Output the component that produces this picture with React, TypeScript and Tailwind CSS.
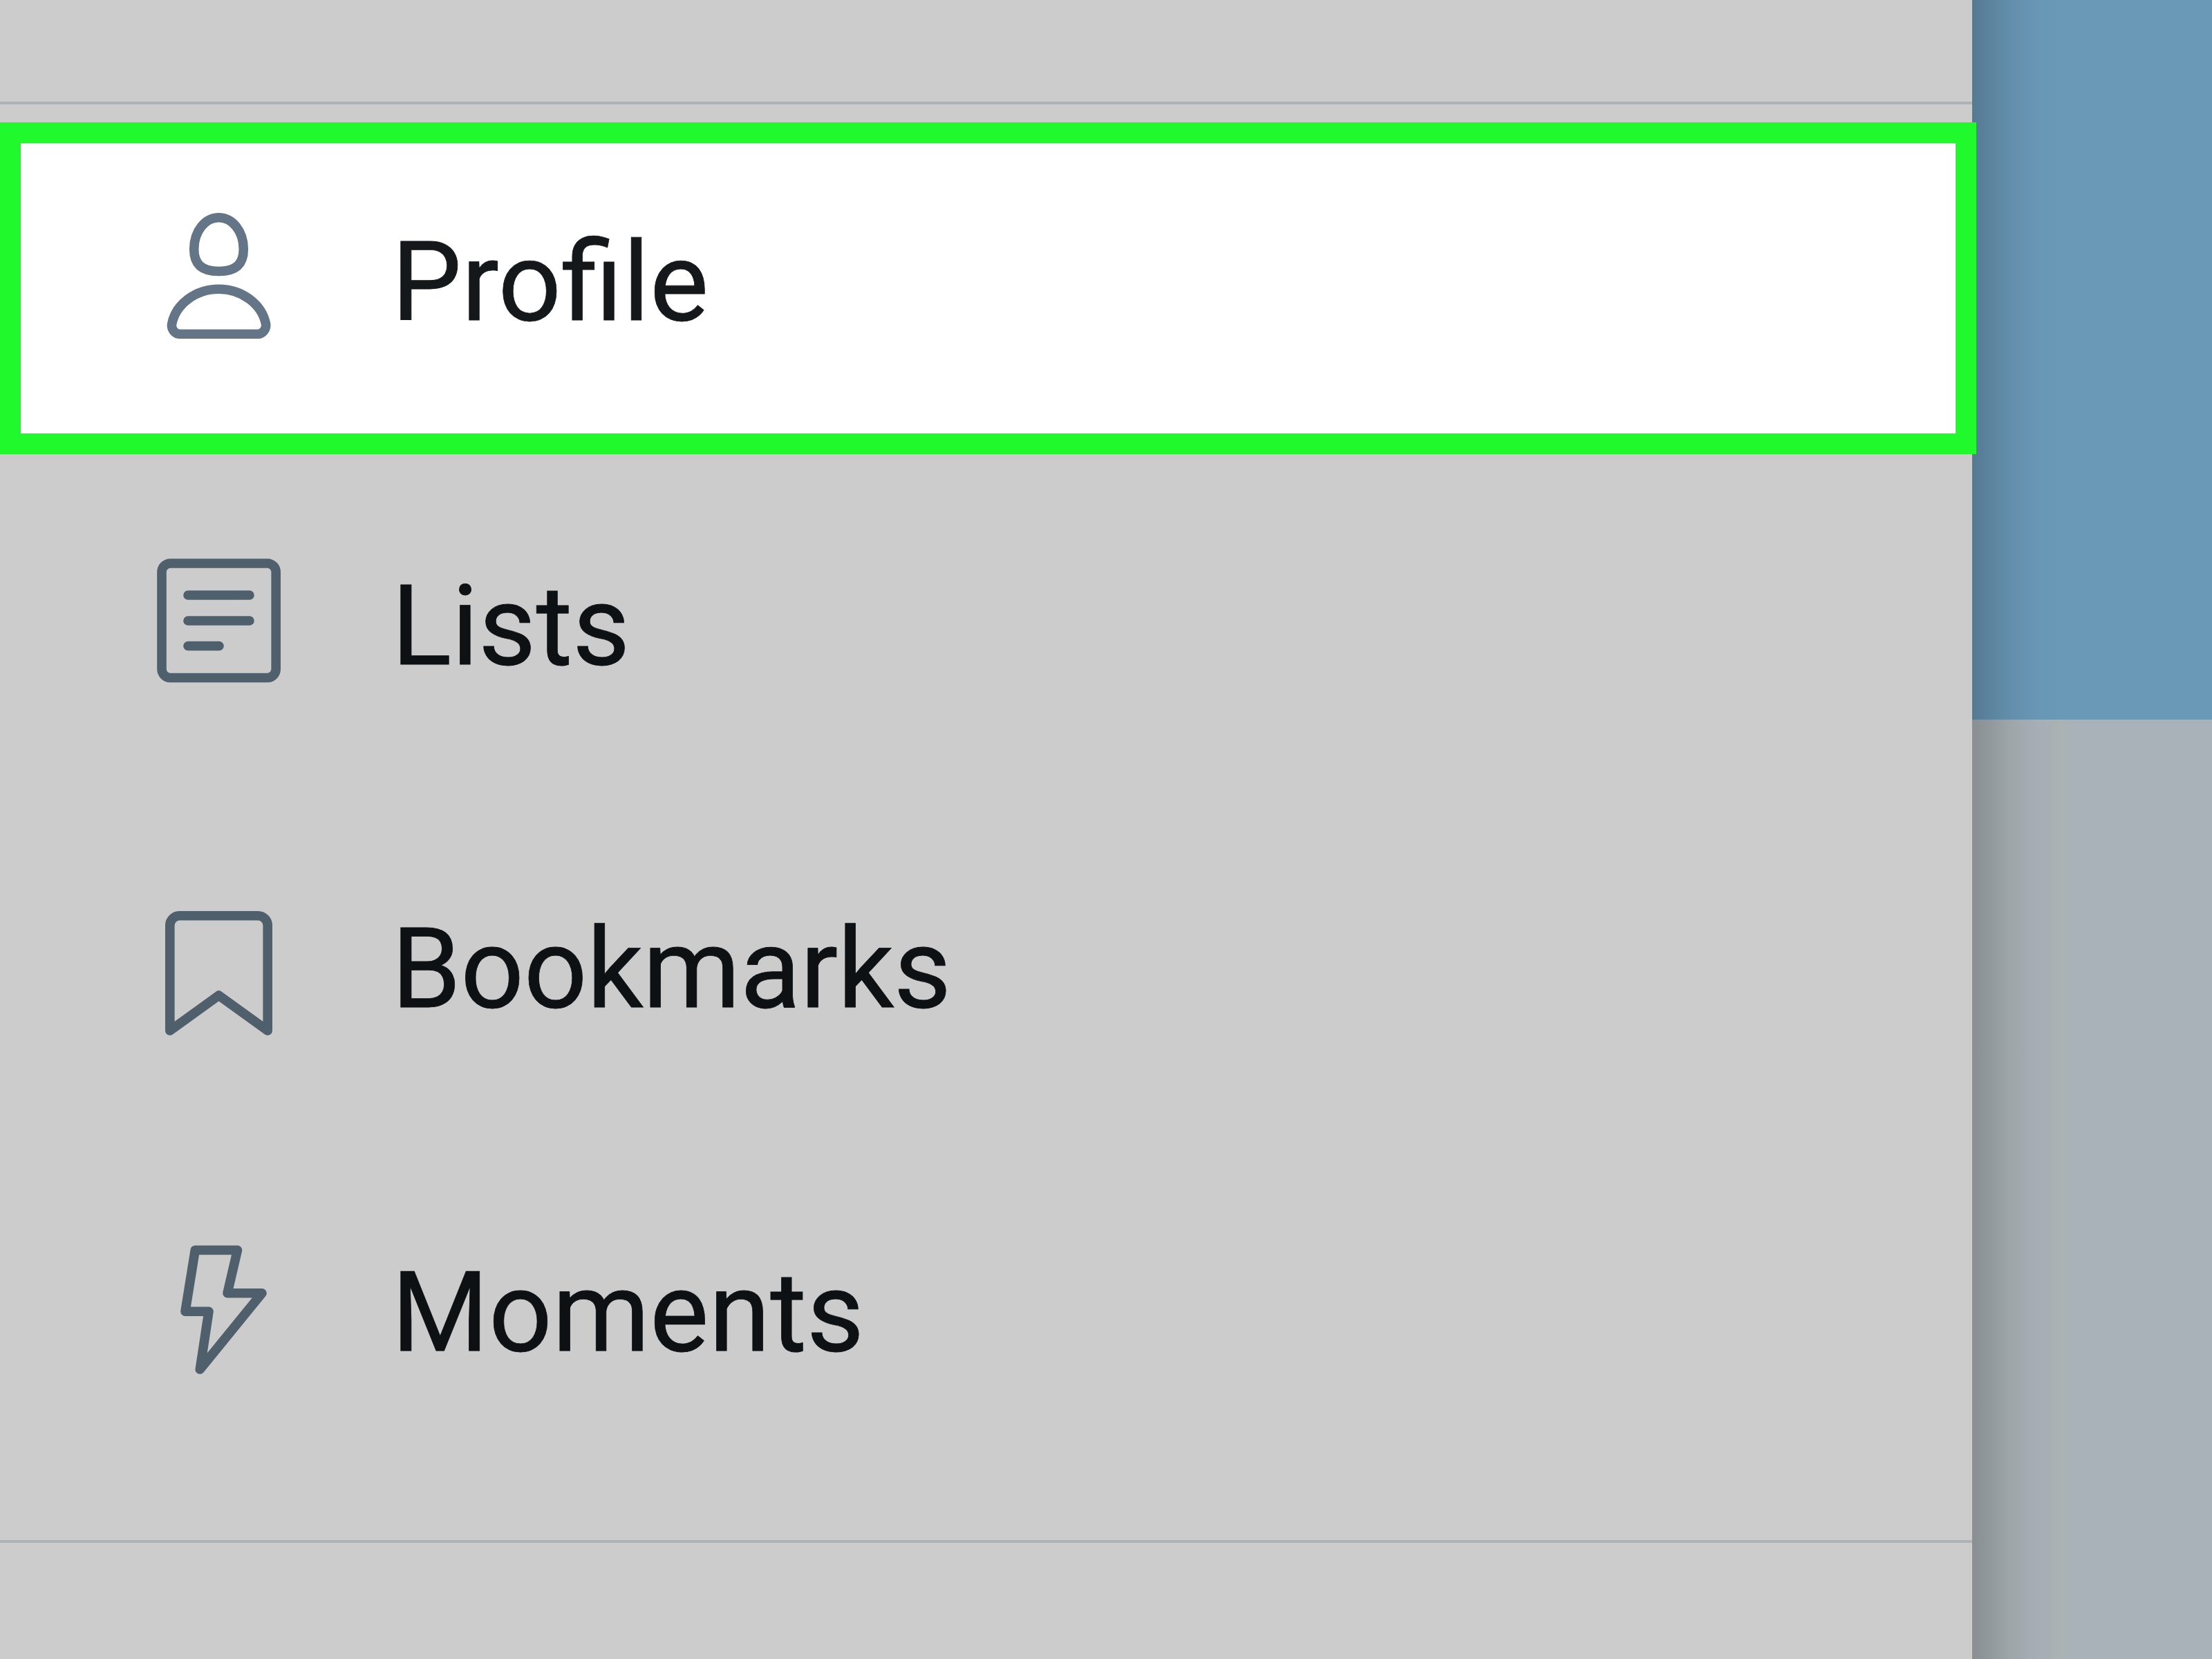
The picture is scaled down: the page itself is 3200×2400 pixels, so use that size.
import type { ReactNode } from "react";

function Icon({ viewBox, children }: { viewBox: string; children: ReactNode }) {
  return (
    <svg
      className="h-[240px] w-[240px] shrink-0"
      viewBox={viewBox}
      fill="none"
      stroke="currentColor"
      strokeWidth={13.6}
      strokeLinecap="round"
      strokeLinejoin="round"
      aria-hidden="true"
    >
      {children}
    </svg>
  );
}

const ProfileIcon = (
  <Icon viewBox="0 8 240 240">
    <path d="M116.5 34.7C136 34.7 152.300 54 152.300 80.500C152.300 101 142 112.500 116.500 112.500C91 112.500 80.700 101 80.700 80.500C80.700 54 97 34.700 116.500 34.700Z" />
    <path d="M60 203.300H173C180 203.300 185.500 196 184.600 189C179 160 150 138.300 116.500 138.300C83 138.300 54 160 48.600 189C47.500 196 53 203.300 60 203.300Z" />
  </Icon>
);

const ListsIcon = (
  <Icon viewBox="0 5 240 240">
    <rect x="34" y="35" width="165.200" height="165.500" rx="12.500" />
    <path d="M72 81H161M72 118H161M72 154.500H117" />
  </Icon>
);

const BookmarksIcon = (
  <Icon viewBox="0 -8.5 240 240">
    <path d="M45.800 200.500V48.300A14 14 0 0 1 59.800 34.300H173.200A14 14 0 0 1 187.200 48.300V200.500L116.500 149.500Z" />
  </Icon>
);

const MomentsIcon = (
  <Icon viewBox="0 -2 240 240">
    <path d="M82.300 28.500H143.500L129 90.700H179L89.300 201L102 117.200H68Z" />
  </Icon>
);

function MenuItem({ icon, label, tracking = "" }: { icon: ReactNode; label: string; tracking?: string }) {
  return (
    <li className="flex h-[496.6px] items-center gap-[126.5px] pl-[200px] text-[#4f5f6c]">
      {icon}
      <span
        className={`pt-[2px] text-[161px] leading-none whitespace-nowrap text-[#0e1114] [-webkit-text-stroke:0.8px_#0e1114] ${tracking}`}
      >
        {label}
      </span>
    </li>
  );
}

export default function App() {
  return (
    <div
      className="flex h-[2400px] w-[3200px] overflow-hidden bg-[#cccccc]"
      style={{ fontFamily: 'Roboto, "Liberation Sans", sans-serif' }}
    >
      <nav className="z-10 flex w-[2853px] shrink-0 flex-col">
        <div className="h-[147px] shrink-0" />
        <div className="h-[4px] shrink-0 bg-[#acb2b5]" />
        <ul className="mt-[26px] flex h-[2051px] shrink-0 flex-col">
          <li className="flex h-[480px] w-[2859px] shrink-0 items-center gap-[126.5px] border-[30px] border-[#20fa2c] bg-white pb-[18px] pl-[170px] text-[#637587]">
            {ProfileIcon}
            <span className="text-[160.5px] leading-none whitespace-nowrap text-[#14181b] [-webkit-text-stroke:0.8px_#14181b]">
              Profile
            </span>
          </li>
          <MenuItem icon={ListsIcon} label="Lists" />
          <MenuItem icon={BookmarksIcon} label="Bookmarks" tracking="tracking-[-0.5px]" />
          <MenuItem icon={MomentsIcon} label="Moments" />
        </ul>
        <div className="h-[4px] shrink-0 bg-[#acb2b5]" />
      </nav>
      <div className="relative flex flex-1 flex-col">
        <div className="h-[1041px] bg-[#6a99b8]" />
        <div className="flex-1 bg-[linear-gradient(to_right,#aab2b6_0px,#aab2b6_65px,#aab1b9_80px,#aab1b8_105px,#aab2b3_118px,#aab2b3_130px,#aab2b9_140px)]" />
        <div className="absolute inset-y-0 left-0 w-[130px] bg-[linear-gradient(to_right,rgba(0,0,0,0.2)_0%,rgba(0,0,0,0.13)_24%,rgba(0,0,0,0.07)_42%,rgba(0,0,0,0.025)_70%,rgba(0,0,0,0)_100%)]" />
      </div>
    </div>
  );
}
